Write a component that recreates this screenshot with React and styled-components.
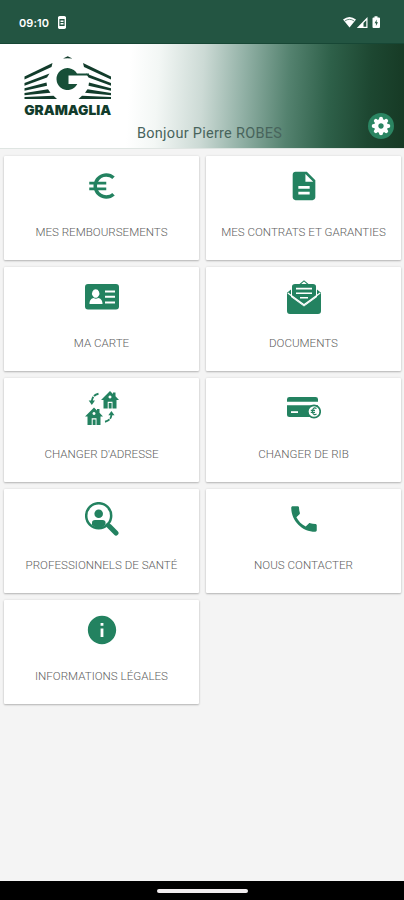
import React from "react";
import styled, { createGlobalStyle } from "styled-components";

const GREEN = "#238260";

const GlobalStyle = createGlobalStyle`
  *, *::before, *::after { box-sizing: border-box; }
  body { margin: 0; background: #f4f4f4; font-family: Roboto, sans-serif; }
`;

const Screen = styled.div`
  display: flex;
  flex-direction: column;
  width: 404px;
  height: 900px;
  background: #f4f4f4;
  overflow: hidden;
`;

const StatusBar = styled.div`
  display: flex;
  align-items: center;
  height: 44px;
  flex: none;
  padding: 2px 22px 0 19px;
  background: #235542;
  border-bottom: 1px solid #174735;
  color: #fff;
`;

const Clock = styled.span`
  font: 600 11px/14px Inter, sans-serif;
  letter-spacing: 0.1px;
  width: 39px;
`;

const StatusIcons = styled.div`
  display: flex;
  align-items: center;
  margin-left: auto;
`;

const Header = styled.header`
  display: flex;
  flex-direction: column;
  justify-content: space-between;
  height: 105px;
  flex: none;
  padding: 11px 10px 6px 24px;
  background: linear-gradient(93deg, #fff 32%, #f3f7f5 39%, #ccdad5 50%, #92b1a6 60%, #54826f 71%, #2e6049 81%, #1d4731 91%, #163924 100%);
  border-bottom: 1px solid #dfe5e2;
`;

const HeaderFoot = styled.div`
  display: flex;
  align-items: flex-end;
  justify-content: space-between;
  margin-top: -5px;
  padding-left: 113px;
`;

const Greeting = styled.span`
  font-size: 14.5px;
  line-height: 17px;
  letter-spacing: 0.27px;
  color: #48645c;
`;

const SettingsButton = styled.button`
  display: flex;
  align-items: center;
  justify-content: center;
  width: 26px;
  height: 26px;
  margin-bottom: 3px;
  padding: 0;
  border: 0;
  border-radius: 50%;
  background: #2b8562;
  color: #fff;
`;

const Grid = styled.main`
  display: grid;
  grid-template-columns: 195px 195px;
  grid-auto-rows: 104px;
  gap: 7px;
  align-content: start;
  flex: 1;
  padding: 7px 4px 0;
`;

const Card = styled.a`
  display: flex;
  flex-direction: column;
  align-items: center;
  padding-top: 13px;
  background: #fff;
  border-radius: 1px;
  box-shadow: 0 1px 2px rgba(0, 0, 0, 0.24), 0 0 3px rgba(0, 0, 0, 0.08);
`;

const CardIcon = styled.svg`
  display: block;
  width: 34px;
  height: 34px;
  fill: ${GREEN};
`;

const CardLabel = styled.span`
  margin-top: 22px;
  font-size: 11.6px;
  font-weight: 300;
  line-height: 14px;
  white-space: nowrap;
  color: #606060;
`;

const NavBar = styled.div`
  display: flex;
  justify-content: center;
  align-items: center;
  height: 19px;
  flex: none;
  background: #000;
`;

const NavHandle = styled.div`
  width: 91px;
  height: 4px;
  border-radius: 2px;
  background: #f1edef;
`;

const stripes = (
  <>
    <path d="M0 21.500 L28 8 L27 12 L0 24.500Z" />
    <path d="M0 28 L25 18.500 L22.500 22.500 L0 30.800Z" />
    <path d="M0 33.300 L22 27.500 L22.500 30.700 L0 35.800Z" />
    <path d="M0 38 L23.500 34.300 L26 37.700 L0 40.300Z" />
    <path d="M0 42 L29 40.800 L32.500 44 H0Z" />
  </>
);

function Logo() {
  return (
    <svg width="88" height="62" viewBox="-0.500 0 88 62" fill="#123c2b">
      {stripes}
      <g transform="translate(86.500 0) scale(-1 1)">{stripes}</g>
      <path d="M43.200 1.300 L38.500 3.600 Q43.200 2.900 47.900 3.600Z" />
      <path fill="#174f38" d="M52.500 18.500 A11 11 0 1 0 52.800 29 H44 V20.600 H64.500 V18.500Z" />
      <text x="-0.300" y="60.300" fontFamily="Inter, sans-serif" fontWeight="900" fontSize="13.500" textLength="87" lengthAdjust="spacingAndGlyphs">GRAMAGLIA</text>
    </svg>
  );
}

const teeth = [0, 45, 90, 135];

const house = (
  <path
    fillRule="evenodd"
    d="M9 0 L12 3 V1.500 H14.500 V5.300 L18 9 H15.500 V17.500 H11.500 V10.800 H6.700 V17.500 H2.500 V9 H0Z M9 4.600 A1.500 1.500 0 1 0 9.010 4.600Z M7.700 12 H10.600 V17.500 H7.700Z"
  />
);

const icons = {
  euro: (
    <CardIcon viewBox="0 0 24 24">
      <path d="M15 18.500c-2.510 0-4.680-1.420-5.760-3.500H15v-2H8.580c-.050-.330-.080-.660-.080-1s.030-.670.080-1H15V9H9.240C10.320 6.920 12.500 5.500 15 5.500c1.610 0 3.090.590 4.230 1.570L21 5.300C19.410 3.870 17.300 3 15 3c-3.920 0-7.240 2.510-8.480 6H3v2h3.060c-.040.330-.060.660-.060 1s.020.670.060 1H3v2h3.520c1.240 3.490 4.560 6 8.480 6 2.310 0 4.410-.870 6-2.300l-1.780-1.770c-1.130.980-2.600 1.570-4.220 1.570z" />
    </CardIcon>
  ),
  contract: (
    <CardIcon viewBox="0 0 24 24">
      <path d="M14 2H6c-1.100 0-1.990.900-1.990 2L4 20c0 1.100.890 2 1.990 2H18c1.100 0 2-.900 2-2V8l-6-6zm2 16H8v-2h8v2zm0-4H8v-2h8v2zm-3-5V3.500L18.500 9H13z" />
    </CardIcon>
  ),
  idCard: (
    <CardIcon viewBox="0 0 34 34">
      <path fillRule="evenodd" d="M3 4 H31 A3 3 0 0 1 34 7 V26.500 A3 3 0 0 1 31 29.500 H3 A3 3 0 0 1 0 26.500 V7 A3 3 0 0 1 3 4Z M10.700 9.300 A3.700 4.200 0 1 0 10.710 9.300Z M4.500 24 H17.500 C17.500 20 15.500 18.400 13.200 18 Q10.900 19.500 8.600 18 C6.400 18.500 4.500 20 4.500 24Z M20 10.500 V12.500 H30 V10.500Z M20 15.800 V17.800 H30 V15.800Z M20 21.400 V23.400 H30 V21.400Z" />
    </CardIcon>
  ),
  documents: (
    <CardIcon viewBox="0 0 34 34">
      <path d="M5 8.500 V6.500 Q5 4 8 4 H12.500 L17 .3 L21.500 4 H26 Q29 4 29 6.500 V16.500 L17 25.500 L5 16.500Z" />
      <path fill="#fff" d="M17 1.600 L19.800 4 H14.200Z M9 7.700 H25 V9.500 H9Z M9 12.500 H25 V14.100 H9Z M13 17 H21 V18.500 H13Z" />
      <path d="M4 9.500 L0 12.800 V31 Q0 34 3 34 H31 Q34 34 34 31 V12.800 L30 9.500 V17 L17 26.500 L4 17Z" />
      <path fill="none" stroke="#fff" strokeWidth="1.400" d="M0.800 13 L17 24.800 L33.200 13" />
    </CardIcon>
  ),
  moving: (
    <CardIcon viewBox="0 0 34 34">
      <g transform="translate(16 0)">{house}</g>
      <g transform="translate(0 16.500)">{house}</g>
      <path fill="none" stroke={GREEN} strokeWidth="1.900" strokeDasharray="5 1 6" d="M13.500 2.800 Q7.500 4 6.800 10" />
      <path d="M3.700 9.500 H10 L6.800 14Z" />
      <path fill="none" stroke={GREEN} strokeWidth="1.900" strokeDasharray="5 1 6" d="M20 30.700 Q26 29.500 26.500 23.500" />
      <path d="M23.300 24.300 H29.500 L26.400 20Z" />
    </CardIcon>
  ),
  bankCard: (
    <CardIcon viewBox="0 0 34 34">
      <path d="M0 10.800 V8.300 Q0 6 2.500 6 H28.500 Q31 6 31 8.300 V10.800Z M0 14.300 H31 V26 H2.500 Q0 26 0 23.500Z" />
      <path fill="#fff" d="M4 20.200 H11 V22 H4Z" />
      <circle cx="27" cy="20.500" r="6.200" fill="#fff" stroke={GREEN} strokeWidth="1.700" />
      <path fill="none" stroke={GREEN} strokeWidth="1.200" d="M29.500 17.500 Q27 15.800 25.800 18.500 Q25 20.500 26 22.500 Q27.300 24.500 29.500 23 M23.800 19.300 H28 M23.800 21.300 H28" />
    </CardIcon>
  ),
  search: (
    <CardIcon viewBox="0 0 34 34">
      <circle cx="13.700" cy="13.700" r="12.500" fill="none" stroke={GREEN} strokeWidth="2.500" />
      <circle cx="13.700" cy="11.700" r="4.300" />
      <path d="M7 23 V20.500 Q7 18 10 17.900 H17.500 Q20.500 18 20.500 20.500 V23 Q17 26 13.700 26 Q10 26 7 23Z" />
      <path fill="none" stroke={GREEN} strokeWidth="5" strokeLinecap="round" d="M24.300 24.300 L31 31" />
      <path stroke={GREEN} strokeWidth="2.800" d="M21.500 21.500 L25 25" />
    </CardIcon>
  ),
  phone: (
    <CardIcon viewBox="0 0 24 24">
      <path d="M6.620 10.790c1.440 2.830 3.760 5.140 6.590 6.590l2.200-2.200c.270-.270.670-.360 1.020-.240 1.120.370 2.330.570 3.570.570.550 0 1 .450 1 1V20c0 .550-.450 1-1 1-9.390 0-17-7.610-17-17 0-.550.450-1 1-1h3.500c.550 0 1 .450 1 1 0 1.250.200 2.450.570 3.570.110.350.030.740-.250 1.020l-2.200 2.200z" />
    </CardIcon>
  ),
  info: (
    <CardIcon viewBox="0 0 24 24">
      <path d="M12 2C6.480 2 2 6.480 2 12s4.480 10 10 10 10-4.480 10-10S17.520 2 12 2zm1 15h-2v-6h2v6zm0-8h-2V7h2v2z" />
    </CardIcon>
  ),
};

const items = [
  { icon: "euro", label: "MES REMBOURSEMENTS" },
  { icon: "contract", label: "MES CONTRATS ET GARANTIES" },
  { icon: "idCard", label: "MA CARTE" },
  { icon: "documents", label: "DOCUMENTS" },
  { icon: "moving", label: "CHANGER D'ADRESSE" },
  { icon: "bankCard", label: "CHANGER DE RIB" },
  { icon: "search", label: "PROFESSIONNELS DE SANTÉ" },
  { icon: "phone", label: "NOUS CONTACTER" },
  { icon: "info", label: "INFORMATIONS LÉGALES" },
];

export default function App() {
  return (
    <Screen>
      <GlobalStyle />
      <StatusBar>
        <Clock>09:10</Clock>
        <svg width="8" height="13" viewBox="0 0 8 13">
          <rect x="0.700" y="0.700" width="6.600" height="11.600" rx="1" fill="none" stroke="#fff" strokeWidth="1.400" />
          <path fill="#fff" d="M0 1h8v2H0zM0 10h8v2H0zM2.500 4.500h3v1.500h-3zM2.500 7h3v1.500h-3z" />
        </svg>
        <StatusIcons>
          <svg width="39" height="13" viewBox="0 0 39 13" fill="#fff">
            <path d="M0 3.500 Q6.500-1.500 13 3.500 L6.500 11.500Z" />
            <path fill="none" stroke="#235542" strokeWidth="0.700" d="M1.800 5 Q6.500 1.700 11.200 5" />
            <path fillRule="evenodd" d="M13.800 12 L24.500 1 V12Z M20.500 10.800 H23.300 V4.200 L20.500 7Z" />
            <path d="M31.500 1.500 V.3 H34.500 V1.500 H36 Q37 1.500 37 2.500 V11 Q37 12 36 12 H30.500 Q29.500 12 29.500 11 V2.500 Q29.500 1.500 30.500 1.500Z" />
            <path fill="#235542" d="M33.700 3.500 L31.600 7.300 H33 L32.900 10 L35 6.300 H33.600Z" />
          </svg>
        </StatusIcons>
      </StatusBar>
      <Header>
        <Logo />
        <HeaderFoot>
          <Greeting>Bonjour Pierre ROBES</Greeting>
          <SettingsButton aria-label="Paramètres">
            <svg width="20" height="20" viewBox="-10 -10 20 20" fill="none" stroke="currentColor">
              <circle r="4.800" strokeWidth="4.200" />
              {teeth.map((angle) => (
                <path
                  key={angle}
                  transform={`rotate(${angle})`}
                  strokeWidth="4"
                  strokeLinecap="round"
                  d="M0 -7.300 V-6 M0 7.300 V6"
                />
              ))}
            </svg>
          </SettingsButton>
        </HeaderFoot>
      </Header>
      <Grid>
        {items.map((item) => (
          <Card key={item.icon}>
            {icons[item.icon]}
            <CardLabel>{item.label}</CardLabel>
          </Card>
        ))}
      </Grid>
      <NavBar>
        <NavHandle />
      </NavBar>
    </Screen>
  );
}
